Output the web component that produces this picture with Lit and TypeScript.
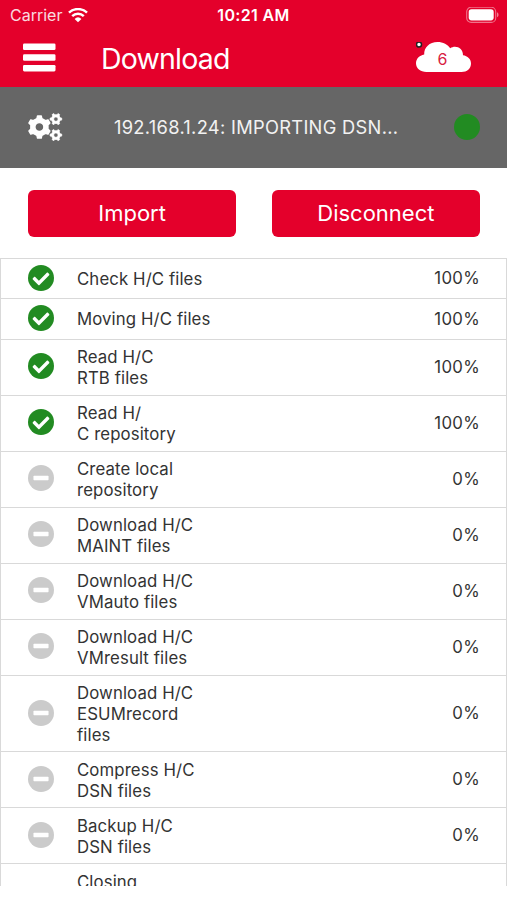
import { LitElement, html, css, svg } from "lit";
import { customElement, property } from "lit/decorators.js";

interface Step {
  name: string[];
  percent: number | null;
}

const STEPS: Step[] = [
  { name: ["Check H/C files"], percent: 100 },
  { name: ["Moving H/C files"], percent: 100 },
  { name: ["Read H/C", "RTB files"], percent: 100 },
  { name: ["Read H/", "C repository"], percent: 100 },
  { name: ["Create local", "repository"], percent: 0 },
  { name: ["Download H/C", "MAINT files"], percent: 0 },
  { name: ["Download H/C", "VMauto files"], percent: 0 },
  { name: ["Download H/C", "VMresult files"], percent: 0 },
  { name: ["Download H/C", "ESUMrecord", "files"], percent: 0 },
  { name: ["Compress H/C", "DSN files"], percent: 0 },
  { name: ["Backup H/C", "DSN files"], percent: 0 },
  { name: ["Closing"], percent: null },
];

/** Outline of a gear with flared teeth and a round hole. */
function gear(cx: number, cy: number, outer: number, inner: number, hole: number, teeth: number, turn: number): string {
  const at = (r: number, a: number) => `${(cx + r * Math.cos(a)).toFixed(2)} ${(cy + r * Math.sin(a)).toFixed(2)}`;
  const pitch = (Math.PI * 2) / teeth;
  const points: string[] = [];
  for (let i = 0; i < teeth; i++) {
    const a = turn + i * pitch;
    points.push(at(inner, a - pitch * 0.27), at(outer, a - pitch * 0.16), at(outer, a + pitch * 0.16), at(inner, a + pitch * 0.27));
  }
  return `M${points.join("L")}ZM${cx - hole} ${cy}a${hole} ${hole} 0 1 0 ${hole * 2} 0a${hole} ${hole} 0 1 0 ${-hole * 2} 0Z`;
}

@customElement("status-icon")
export class StatusIcon extends LitElement {
  @property({ type: Boolean }) done = false;

  static styles = css`
    :host { display: block; width: 26px; height: 26px; }
    svg { display: block; width: 26px; height: 26px; }
    .done { fill: #228b22; }
    .waiting { fill: #cbcbcb; }
    .mark { fill: #fff; }
  `;

  render() {
    return html`<svg viewBox="8 8 496 496">
      <circle class=${this.done ? "done" : "waiting"} cx="256" cy="256" r="248"></circle>
      ${this.done
        ? svg`<path class="mark" d="M227.314 387.314l184-184c6.248-6.248 6.248-16.379 0-22.627l-22.627-22.627c-6.248-6.249-16.379-6.249-22.628 0L216 308.118l-70.059-70.059c-6.248-6.248-16.379-6.248-22.628 0l-22.627 22.627c-6.248 6.248-6.248 16.379 0 22.627l104 104c6.249 6.249 16.379 6.249 22.628.001z"/>`
        : svg`<rect class="mark" x="112" y="214" width="288" height="84" rx="12"/>`}
    </svg>`;
  }
}

@customElement("step-row")
export class StepRow extends LitElement {
  @property({ attribute: false }) step!: Step;

  static styles = css`
    :host { display: block; }
    .row {
      display: grid;
      grid-template-columns: 49px 1fr auto;
      align-items: center;
      box-sizing: border-box;
      min-height: 40.3px;
      padding: 6.8px 26px 6.8px 27px;
      border-bottom: 1px solid #d9d9d9;
      font-size: 16.8px;
      line-height: 20.7px;
      color: #333;
    }
    .single { padding-top: 6px; padding-bottom: 6px; }
    .last { min-height: 0; border-bottom: 0; padding-bottom: 0; }
    .icon { margin: -0.7px 0 0.7px; }
    .name { margin: 0.8px 0 -0.8px; letter-spacing: 0.1px; white-space: nowrap; }
    .percent { letter-spacing: 0.3px; }
  `;

  render() {
    const { name, percent } = this.step;
    const kind = percent === null ? "last" : name.length === 1 ? "single" : "";
    return html`<div class="row ${kind}">
      ${percent === null ? html`<span></span>` : html`<status-icon class="icon" ?done=${percent === 100}></status-icon>`}
      <div class="name">${name.map((line) => html`<div>${line}</div>`)}</div>
      ${percent === null ? null : html`<div class="percent">${percent}%</div>`}
    </div>`;
  }
}

@customElement("app-root")
export class AppRoot extends LitElement {
  static styles = css`
    :host {
      display: flex;
      flex-direction: column;
      height: 900px;
      overflow: hidden;
      background: #fff;
      font-family: Inter, "Liberation Sans", sans-serif;
    }
    svg { display: block; }
    .top { height: 87px; background: #e4002b; color: #fff; flex: none; }
    .system {
      display: grid;
      grid-template-columns: 1fr auto 1fr;
      align-items: center;
      height: 30px;
      padding: 0 8px 0 10px;
      font-size: 16px;
    }
    .network { display: flex; align-items: center; gap: 6px; }
    .carrier { opacity: 0.85; }
    .time { font-weight: 600; letter-spacing: 0.35px; margin-right: 2px; }
    .battery { justify-self: end; }
    .bar { display: flex; align-items: center; height: 57px; padding: 0 36px 0 23px; }
    .menu { margin-bottom: 2px; }
    .title { flex: 1; margin-left: 45px; font-size: 28.5px; letter-spacing: -0.8px; }
    .cloud { position: relative; width: 55px; height: 33px; }
    .count { position: absolute; left: 0; width: 53px; top: 7px; text-align: center; font-size: 16px; line-height: 20px; color: #d8203f; }
    .status {
      display: flex;
      align-items: center;
      flex: none;
      height: 81px;
      padding: 0 27px 1px;
      background: #666;
      color: #f2f2f2;
      box-sizing: border-box;
    }
    .message { flex: 1; margin-left: 51px; font-size: 18.3px; letter-spacing: 0.3px; white-space: nowrap; }
    .lamp { width: 26px; height: 26px; border-radius: 50%; background: #228b22; }
    .actions { display: flex; gap: 35.5px; padding: 22px 27px 21px 28px; flex: none; }
    .button {
      flex: 1;
      height: 47px;
      border: 0;
      border-radius: 6px;
      padding: 0;
      background: #e4002b;
      color: #fff;
      font: 400 22px/47px Inter, "Liberation Sans", sans-serif;
    }
    .list {
      flex: none;
      height: 628px;
      box-sizing: border-box;
      overflow: hidden;
      border: 1px solid #d9d9d9;
      border-bottom: 0;
    }
  `;

  render() {
    return html`
      <header class="top">
        <div class="system">
          <div class="network">
            <span class="carrier">Carrier</span>
            <svg width="20" height="15" viewBox="0 0 20 15" fill="none" stroke="#fff" stroke-width="2.5">
              <path d="M1 4.7a13 13 0 0 1 18 0M4.2 8.1a8.4 8.4 0 0 1 11.6 0" />
              <path d="M10 14.300L6.600 10.900a5 5 0 0 1 6.800 0z" fill="#fff" stroke="none" />
            </svg>
          </div>
          <div class="time">10:21 AM</div>
          <svg class="battery" width="33" height="17" viewBox="0 0 33 17">
            <rect x="0.7" y="0.2" width="29" height="15.2" rx="4.5" fill="none" stroke="#fff" stroke-opacity="0.45" stroke-width="1.1" />
            <rect x="2.7" y="2.2" width="25" height="11.2" rx="2.8" fill="#fff" />
            <path d="M31 5.3c2 .8 2 4.2 0 5z" fill="#fff" fill-opacity="0.5" />
          </svg>
        </div>
        <div class="bar">
          <svg class="menu" width="33" height="29" viewBox="0 0 33 29" fill="#fff">
            <rect y="0.5" width="32.5" height="6.5" rx="1.3" /><rect y="11.2" width="32.5" height="6.5" rx="1.3" /><rect y="21.9" width="32.5" height="6.5" rx="1.3" />
          </svg>
          <div class="title">Download</div>
          <div class="cloud">
            <svg width="55" height="34" viewBox="0 0 55 34">
              <path fill="#fff" d="M10.500 30C4.300 30 0 26.500 0 21.300C0 16.800 3.300 13.500 8.200 12.500C7.800 5.500 13.500 0 21.500 0C27 0 32 2.500 34.200 6.300C39.500 2.500 47.300 6 47 13.300C51.500 14 55 17 55 21.500C55 26.500 51 30 45.500 30Z" />
              <circle cx="3" cy="2.600" r="2.500" fill="#fff" stroke="#222" stroke-width="1.500" />
            </svg>
            <span class="count">6</span>
          </div>
        </div>
      </header>
      <section class="status">
        <svg width="36" height="30" viewBox="0 0 36 30" fill="#fff" fill-rule="evenodd" stroke="#fff" stroke-width="1.4" stroke-linejoin="round">
          <path d=${gear(12.4, 15, 11.2, 8.8, 4.5, 6, Math.PI / 2)} />
          <path stroke-width="0.7" d=${gear(28.9, 7.1, 5.9, 4.5, 2.2, 6, 0)} />
          <path stroke-width="0.7" d=${gear(28.9, 23.1, 5.9, 4.5, 2.2, 6, 0)} />
        </svg>
        <div class="message">192.168.1.24: IMPORTING DSN...</div>
        <div class="lamp"></div>
      </section>
      <div class="actions">
        <button class="button">Import</button>
        <button class="button">Disconnect</button>
      </div>
      <main class="list">${STEPS.map((step) => html`<step-row .step=${step}></step-row>`)}</main>
    `;
  }
}
